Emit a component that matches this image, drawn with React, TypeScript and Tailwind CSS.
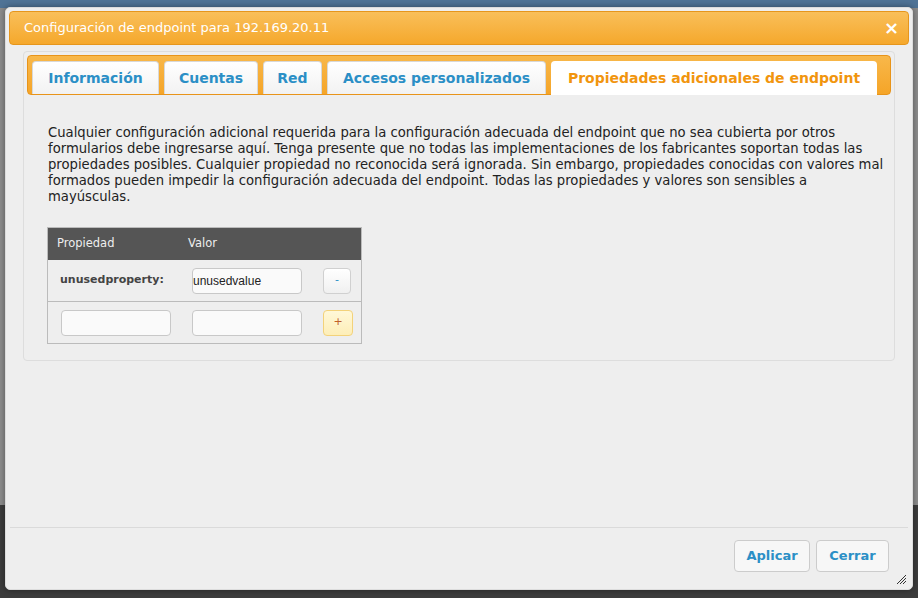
import React from "react";

const tabs = [
  { label: "Información", w: "w-[127px]" },
  { label: "Cuentas", w: "w-[94px]" },
  { label: "Red", w: "w-[59px]" },
  { label: "Accesos personalizados", w: "w-[219px]" },
];

function ResizeGrip() {
  return (
    <svg width="11" height="11" viewBox="0 0 11 11" aria-hidden="true">
      <path d="M10 1L1 10M10 4L4 10M10 7L7 10" stroke="#333" strokeWidth="1" />
    </svg>
  );
}

export default function App() {
  return (
    <div className="h-[598px] w-[918px] overflow-hidden bg-[linear-gradient(to_bottom,#4f7396_0px,#4f7396_8px,#8c8c8c_8px,#8c8c8c_505px,#3c3c3c_505px)] pl-[5px] pt-[7px] font-['DejaVu_Sans',sans-serif]">
      {/* dialog */}
      <div className="flex h-[583px] w-[908px] flex-col rounded-[5px] border border-[#dcdcdc] bg-[#eeeeee] p-[3px] shadow-[0_0_6px_rgba(0,0,0,.4)]">
        {/* title bar */}
        <div className="flex h-[34px] items-center justify-between rounded-[4px] border border-[#e6961c] bg-[linear-gradient(to_bottom,#f9bf5a,#f5a82c)] pl-[14px] pr-[9px]">
          <span className="text-[13px] text-white">Configuración de endpoint para 192.169.20.11</span>
          <span className="text-[18px] font-bold leading-none text-white">×</span>
        </div>

        {/* tabs widget */}
        <div className="mx-[14px] mt-[6px] rounded-[4px] border border-[#dddddd] bg-[#eeeeee] p-[3px] pb-[16px]">
          <div className="flex h-[40px] items-end gap-[5px] rounded-[4px] border border-[#e8941a] bg-[linear-gradient(to_bottom,#f8b84a,#f5a528)] px-[4px]">
            {tabs.map((t) => (
              <div
                key={t.label}
                className={`${t.w} flex h-[33px] items-center justify-center rounded-t-[4px] border border-b-0 border-[#d8d8d8] bg-[linear-gradient(to_bottom,#ffffff,#f2f2f2)] text-[14px] font-bold text-[#2b8fc6]`}
              >
                {t.label}
              </div>
            ))}
            <div className="mb-[-1px] flex h-[34px] w-[326px] items-center justify-center rounded-t-[4px] bg-white text-[14px] font-bold text-[#f1950e]">
              Propiedades adicionales de endpoint
            </div>
          </div>

          <div className="px-[21px] pt-[30px]">
            <p className="whitespace-nowrap text-[13.2px] leading-[16px] text-[#222]">
              Cualquier configuración adicional requerida para la configuración adecuada del endpoint que no sea cubierta por otros
              <br />
              formularios debe ingresarse aquí. Tenga presente que no todas las implementaciones de los fabricantes soportan todas las
              <br />
              propiedades posibles. Cualquier propiedad no reconocida será ignorada. Sin embargo, propiedades conocidas con valores mal
              <br />
              formados pueden impedir la configuración adecuada del endpoint. Todas las propiedades y valores son sensibles a
              <br />
              mayúsculas.
            </p>

            <div className="ml-[-1px] mt-[22px] w-[315px] border border-[#bbbbbb]">
              <div className="flex h-[32px] items-center bg-[#555555] text-[11.5px] text-[#eeeeee]">
                <span className="w-[140px] pl-[9px]">Propiedad</span>
                <span>Valor</span>
              </div>
              <div className="flex h-[42px] items-center border-b border-[#bbbbbb]">
                <span className="w-[144px] pl-[12px] text-[11px] font-bold text-[#444]">unusedproperty:</span>
                <div className="flex h-[26px] w-[110px] items-center rounded-[4px] border border-[#c8c8c8] bg-[#fafafa] font-['Liberation_Sans',sans-serif] text-[12px] text-[#222]">
                  unusedvalue
                </div>
                <button className="ml-[21px] flex h-[26px] w-[28px] items-center justify-center rounded-[4px] border border-[#d0d0d0] bg-[linear-gradient(to_bottom,#ffffff,#f0f0f0)] text-[11px] text-[#2b8fc6]">
                  -
                </button>
              </div>
              <div className="flex h-[41px] items-center">
                <div className="ml-[13px] h-[26px] w-[110px] rounded-[4px] border border-[#c8c8c8] bg-[#fafafa]" />
                <div className="ml-[21px] h-[26px] w-[110px] rounded-[4px] border border-[#c8c8c8] bg-[#fafafa]" />
                <button className="ml-[21px] flex h-[26px] w-[30px] items-center justify-center rounded-[4px] border border-[#f3d27a] bg-[linear-gradient(to_bottom,#fff8d8,#fdeeb8)] text-[11px] text-[#c0602a]">
                  +
                </button>
              </div>
            </div>
          </div>
        </div>

        <div className="flex-1" />

        {/* footer */}
        <div className="relative mx-[1px] flex h-[59px] items-start justify-end gap-[6px] border-t border-[#dadada] pr-[19px] pt-[12px]">
          <button className="h-[32px] w-[76px] rounded-[4px] border border-[#cccccc] bg-[#f7f7f7] text-[13px] font-bold text-[#2b8fc6]">
            Aplicar
          </button>
          <button className="h-[32px] w-[73px] rounded-[4px] border border-[#cccccc] bg-[#f7f7f7] text-[13px] font-bold text-[#2b8fc6]">
            Cerrar
          </button>
          <div className="absolute bottom-[1px] right-[1px]">
            <ResizeGrip />
          </div>
        </div>
      </div>
    </div>
  );
}
